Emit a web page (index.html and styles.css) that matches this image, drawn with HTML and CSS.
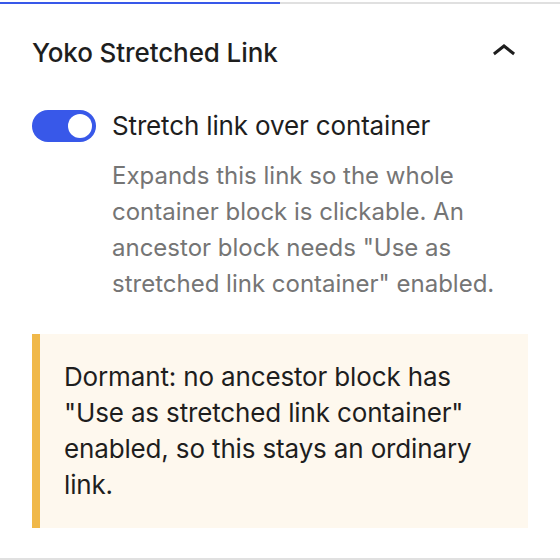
FILE: index.html
```html
<!DOCTYPE html>
<html lang="en">
<head>
<meta charset="utf-8">
<title>Yoko Stretched Link</title>
<link rel="stylesheet" href="styles.css">
</head>
<body>
<div class="tabbar"><span class="tab-active"></span><span class="tab-rest"></span></div>
<section class="panel">
  <div class="panel-header">
    <h2 class="panel-title">Yoko Stretched Link</h2>
    <svg class="chevron" viewBox="0 0 24 24" width="48" height="48" aria-hidden="true"><path d="M6.5 12.4L12 8l5.5 4.4-.9 1.2L12 10l-4.6 3.6-.9-1.2z"/></svg>
  </div>
  <div class="panel-body">
    <div class="toggle-row">
      <span class="toggle"><span class="knob"></span></span>
      <span class="toggle-label">Stretch link over container</span>
    </div>
    <p class="help">Expands this link so the whole container block is clickable. An ancestor block needs "Use as stretched link container" enabled.</p>
    <div class="notice">
      <p class="notice-content">Dormant: no ancestor block has "Use as stretched link container" enabled, so this stays an ordinary link.</p>
    </div>
  </div>
</section>
</body>
</html>
```
FILE: styles.css
```css
* { box-sizing: border-box; }
html, body { margin: 0; padding: 0; background: #fff; }
body {
  width: 560px;
  height: 560px;
  overflow: hidden;
  font-family: Inter, "Noto Sans", "Liberation Sans", sans-serif;
  color: #1e1e1e;
}
.tabbar {
  display: flex;
  height: 2px;
  margin-top: 2px;
}
.tab-active { width: 280px; background: #3858e9; }
.tab-rest { flex: 1; background: #e0e0e0; }
.panel {
  border-bottom: 2px solid #e0e0e0;
}
.panel-header {
  display: flex;
  align-items: center;
  justify-content: space-between;
  height: 96px;
  padding: 0 32px;
}
.panel-title {
  margin: 2px 0 0;
  font-size: 26px;
  font-weight: 500;
  line-height: 32px;
  letter-spacing: -0.1px;
}
.chevron { fill: #1e1e1e; display: block; }
.panel-body {
  padding: 10px 32px 30px;
}
.toggle-row {
  display: flex;
  align-items: center;
  gap: 16px;
}
.toggle {
  width: 64px;
  height: 32px;
  border-radius: 16px;
  background: #3858e9;
  display: flex;
  align-items: center;
  justify-content: flex-end;
  padding: 4px;
}
.knob {
  width: 24px;
  height: 24px;
  border-radius: 50%;
  background: #fff;
}
.toggle-label {
  font-size: 26px;
  line-height: 32px;
  letter-spacing: -0.15px;
}
.help {
  margin: 16px 0 0 80px;
  font-size: 24px;
  line-height: 36px;
  color: #757575;
}
.notice {
  margin-top: 32px;
  background: #fef8ee;
  border-left: 8px solid #f0b849;
  padding: 25px 44px 25px 24px;
}
.notice-content {
  margin: 0;
  font-size: 26px;
  line-height: 36px;
  letter-spacing: -0.15px;
}
```
